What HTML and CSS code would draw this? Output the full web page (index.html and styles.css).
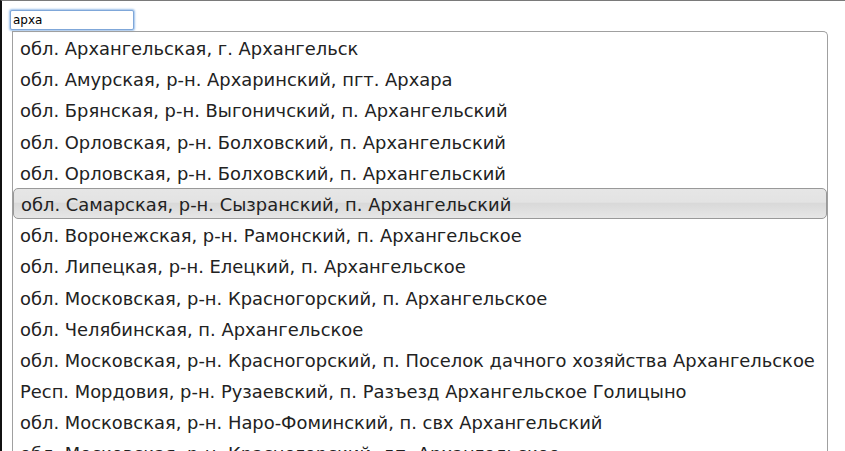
FILE: index.html
```html
<!DOCTYPE html>
<html lang="ru">
<head>
  <meta charset="UTF-8">
  <title>Автодополнение адреса</title>
  <link rel="stylesheet" href="styles.css">
</head>
<body>
  <div class="frame">
    <div class="search">
      <input class="search-input" type="text" value="арха" autofocus>
      <ul class="suggest">
        <li class="suggest-item">обл. Архангельская, г. Архангельск</li>
        <li class="suggest-item">обл. Амурская, р-н. Архаринский, пгт. Архара</li>
        <li class="suggest-item">обл. Брянская, р-н. Выгоничский, п. Архангельский</li>
        <li class="suggest-item">обл. Орловская, р-н. Болховский, п. Архангельский</li>
        <li class="suggest-item">обл. Орловская, р-н. Болховский, п. Архангельский</li>
        <li class="suggest-item active">обл. Самарская, р-н. Сызранский, п. Архангельский</li>
        <li class="suggest-item">обл. Воронежская, р-н. Рамонский, п. Архангельское</li>
        <li class="suggest-item">обл. Липецкая, р-н. Елецкий, п. Архангельское</li>
        <li class="suggest-item">обл. Московская, р-н. Красногорский, п. Архангельское</li>
        <li class="suggest-item">обл. Челябинская, п. Архангельское</li>
        <li class="suggest-item">обл. Московская, р-н. Красногорский, п. Поселок дачного хозяйства Архангельское</li>
        <li class="suggest-item">Респ. Мордовия, р-н. Рузаевский, п. Разъезд Архангельское Голицыно</li>
        <li class="suggest-item">обл. Московская, р-н. Наро-Фоминский, п. свх Архангельский</li>
        <li class="suggest-item">обл. Московская, р-н. Красногорский, дп. Архангельское</li>
      </ul>
    </div>
  </div>
</body>
</html>
```

FILE: styles.css
```css
html, body {margin:0; padding:0; height:100%; overflow:hidden; background:#fff;}
body {font-family:"DejaVu Sans", sans-serif; color:#222;}
.frame {
  height:100%;
  box-sizing:border-box;
  border-top:1px solid #7a7a7a;
  border-left:2px solid #111;
  padding:9px 0 0 8px;
}
.search {width:818px;}
.search-input {
  display:block;
  box-sizing:border-box;
  width:124px; height:20px;
  margin:0 0 1px 0;
  padding:0 2px;
  font:12px "DejaVu Sans", sans-serif;
  color:#000;
  border:1px solid #7fa7d9;
  box-shadow:0 0 2px 1px #9cc0ea;
  outline:none;
  border-radius:2px;
}
.suggest {
  list-style:none;
  margin:0 0 0 2px; padding:0;
  border:1px solid #a0a0a0;
  border-bottom:none;
  border-radius:0 5px 0 0;
}
.suggest-item {
  height:31.2px;
  line-height:31.2px;
  box-sizing:border-box;
  padding:0 0 0 7px;
  font-size:17.9px;
  white-space:nowrap;
  border:1px solid transparent;
  border-left:0; border-right:0;
}
.suggest-item.active {
  border:1px solid #999;
  border-radius:5px;
  padding-left:7px;
  background:linear-gradient(#e6e6e6 0%, #e3e3e3 45%, #d9d9d9 50%, #e6e6e6 100%);
}
```
